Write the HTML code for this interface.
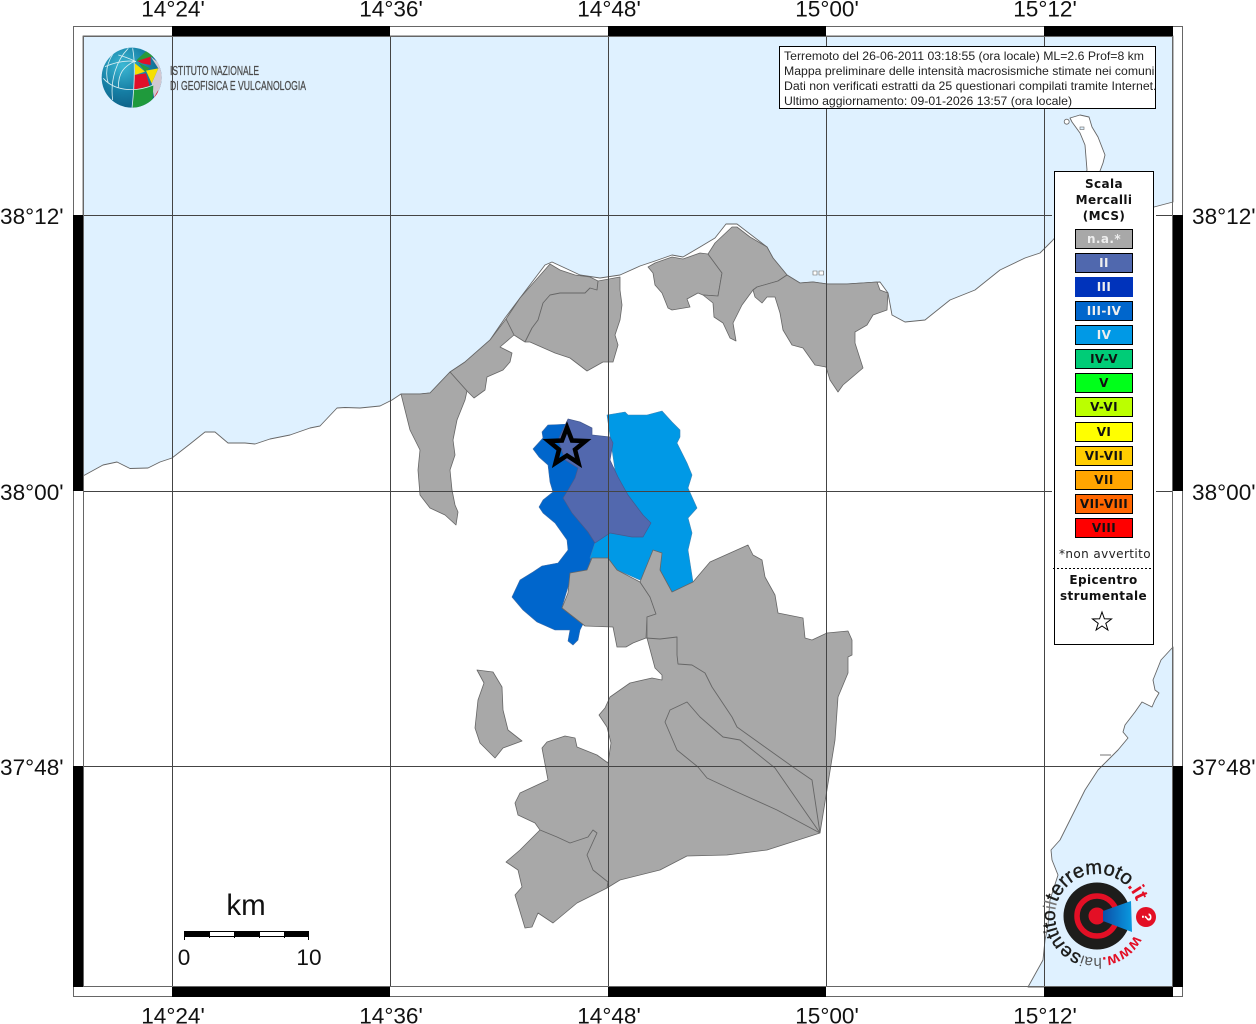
<!DOCTYPE html>
<html><head><meta charset="utf-8"><title>Mappa</title>
<style>
html,body{margin:0;padding:0;background:#fff;width:1256px;height:1024px;overflow:hidden}
svg{display:block;filter:blur(.3px)}
.lab{font-family:"Liberation Sans",sans-serif;font-size:22.6px;fill:#111}
.lg{font-family:"DejaVu Sans",sans-serif;font-size:12px;font-weight:700;letter-spacing:.4px;text-anchor:middle;fill:#111}
.info{font-family:"Liberation Sans",sans-serif;font-size:12.25px;fill:#222}
.ingv{font-family:"Liberation Sans",sans-serif;font-size:13px;fill:#4a4a4a;stroke:#4a4a4a;stroke-width:.25}
.g{fill:#a8a8a8;stroke:#666;stroke-width:.8;stroke-linejoin:round}
.l{fill:none;stroke:#666;stroke-width:.9;stroke-linejoin:round}
.gr{stroke:#444;stroke-width:1;fill:none}
</style></head><body>
<svg width="1256" height="1024" viewBox="0 0 1256 1024" xmlns="http://www.w3.org/2000/svg">
<defs>
<radialGradient id="gb" cx=".35" cy=".3" r=".8"><stop offset="0" stop-color="#3cb8d4"/><stop offset=".55" stop-color="#157da3"/><stop offset="1" stop-color="#0d5a80"/></radialGradient>
<linearGradient id="cone" x1="0" x2="1" y1="0" y2="0"><stop offset="0" stop-color="#0b4fa8"/><stop offset="1" stop-color="#0a9ae0"/></linearGradient>
<clipPath id="gc"><circle cx="215" cy="233" r="90"/></clipPath>
<clipPath id="ic"><rect x="779" y="46" width="377" height="63"/></clipPath>
</defs>
<rect x="83" y="36" width="1090" height="951" fill="#fff"/>
<!-- sea -->
<path fill="#dff1ff" stroke="#666" stroke-width=".9" stroke-linejoin="round" d="M83 36H1173V202L1154 207L1110 205L1100 171L1103 163L1105 155L1098 137L1092 127L1089 117L1080 115L1070 118L1072 122L1080 133L1085 145L1087 170L1075 215L1052 241L1040 253L1025 258L1000 270L975 290L950 300L925 320L905 322L892 315L888 293L880 282L847 284L827 284L813 282L800 283L787 275L773 258L767 247L750 234L737 224L726 224L715 238L700 247L683 257L672 255L655 261L640 266L620 275L600 278L580 275L565 268L552 262L545 265L520 298L505 318L490 340L465 362L450 372L430 393L420 394L401 394L392 400L380 406L360 408L345 407.5L337 408L320 426L310 428L290 435L270 439L255 444L245 443L228 443L215 432L205 432L190 444L172 458L160 462L148 468L130 468.5L117 462L103 465L83 476Z"/>
<path fill="#dff1ff" stroke="#666" stroke-width=".9" stroke-linejoin="round" d="M1173 647L1161 660L1153 680L1155 690L1159 693L1155 700L1152 707L1142 702L1135 712L1125 725L1123 732L1128 738L1118 750L1108 760L1098 770L1085 790L1060 840L1051 850L1052 860L1058 875L1050 900L1048 925L1045 940L1043 960L1028 987H1173Z"/>
<path class="l" d="M1100 755H1111"/>
<circle cx="1066.7" cy="121.7" r="2.5" fill="#fff" stroke="#666" stroke-width=".8"/>
<rect x="1080" y="127" width="4" height="2.5" fill="#dff1ff" stroke="#666" stroke-width=".6"/>
<path fill="#fff" stroke="#666" stroke-width=".6" d="M813 271h4v4h-4zM819 271h4.500v4h-4.500z"/>
<!-- coloured -->
<path fill="#0066cc" stroke="#3a6ba8" stroke-width=".6" stroke-linejoin="round" d="M542 432L548 425L570 424L590 440L610 500L595 543L588 570L572 573L568 587L562 607L585 620L580 630L578 640L573 645L568 641L570 630L555 630L537 622L523 610L512 597L520 580L533 572L542 566L558 563L568 550L567 540L555 523L543 513L539 507L543 500L553 492L550 482L548 465L539 457L533 449L543 438Z"/>
<path fill="#0099e6" stroke="#3a85b8" stroke-width=".6" stroke-linejoin="round" d="M607 415L625 412L628 415L647 415L662 411L672 422L680 430L680 437L677 443L687 463L692 475L688 488L697 508L688 518L692 533L688 550L693 582L672 593L655 560L640 580L590 558L595 543L610 533L615 470Z"/>
<path fill="#5268ae" stroke="#445a90" stroke-width=".7" stroke-linejoin="round" d="M568 419L580 422L592 428L592 435L610 437L613 443L610 460L618 477L628 495L643 515L651 523L643 537L632 537L610 533L595 543L588 532L572 513L563 498L568 490L575 478L578 468L565 460L558 440Z"/>
<!-- grey -->
<path class="g" d="M550 264L560 270L575 275L590 277L598 281L620 277L620 290L622 305L620 320L615 335L618 345L613 362L603 362L587 371L570 358L555 353L530 342L525 342L514 335L506 319L520 298Z"/>
<path class="l" d="M598 281L597 290L590 288L585 293L560 293L550 295L543 303L538 320L532 328L525 342"/>
<path class="g" d="M506 319L514 335L500 347L512 353L510 362L503 370L487 377L485 390L474 398L467 391L450 372L465 362L490 340Z"/>
<path class="g" d="M401 394L420 394L430 393L450 372L467 391L465 400L457 420L453 440L455 455L450 470L452 490L455 505L458 512L456 525L445 515L430 508L420 495L418 470L420 450L410 430L405 410Z"/>
<path class="g" d="M648 267L655 263L672 257L683 259L700 253L708 254L722 273L718 296L703 295L698 293L687 299L690 307L672 310L668 308L662 293L655 285L653 273Z"/>
<path class="g" d="M708 254L715 243L732 227L737 227L750 237L767 247L773 258L787 275L778 281L757 287L753 290L742 305L733 323L736 341L730 338L723 323L714 317L713 303L703 295L718 296L722 273Z"/>
<path class="g" d="M787 275L800 283L813 282L827 284L847 284L877 282L880 290L888 293L887 310L873 315L867 325L855 332L855 343L863 368L843 385L838 392L830 380L826 367L815 365L803 348L792 345L783 330L780 313L775 297L767 297L762 303L755 297L753 290L757 287L778 281Z"/>
<path class="g" d="M570 573L587 570L592 558L608 558L617 570L640 582L650 597L656 614L647 617L646 638L633 643L626 647L617 647L613 627L585 626L562 608L568 593Z"/>
<path class="g" d="M647 638L655 668L662 675L662 680L652 678L630 683L610 697L605 708L599 715L607 727L611 743L608 763L597 755L577 747L575 738L565 736L547 742L542 748L548 780L520 793L515 803L518 815L535 823L540 830L520 850L506 862L518 870L522 887L515 895L525 928L532 927L538 913L553 923L577 903L607 888L620 880L660 870L687 856L727 855L767 850L820 833L835 740L838 697L848 673L848 657L852 655L852 640L848 631L827 633L812 640L805 638L803 618L778 613L775 595L765 577L762 560L753 555L748 545L710 562L693 582L672 592L660 570L662 553L653 550L640 582L650 597L656 614L647 617Z"/>
<path class="l" d="M646 638L660 639L677 637L677 655L678 664L692 665L705 673L712 687L732 717L737 727L793 767L812 780L820 833"/>
<path class="l" d="M820 833L777 810L737 792L707 778L698 767L677 750L665 722L670 710L687 702L700 717L723 737L740 740L775 768L820 833"/>
<path class="l" d="M540 830L557 837L570 843L588 837L593 830L597 833L587 855L593 870L608 882L607 888"/>
<path class="g" d="M477 670L493 672L502 687L503 710L508 730L522 741L503 748L495 758L480 743L475 728L478 700L484 683Z"/>
<!-- grid -->
<path class="gr" d="M172.500 36V987M390.500 36V987M608.500 36V987M826.500 36V987M1044.500 36V987M83 215.500H1052M1156 215.500H1173M83 491.500H1052M1156 491.500H1173M83 766.500H1173"/>
<!-- star -->
<path d="M567 427.500L572 440.500L585.500 441L575 449.600L578.500 463L567 455.500L555.500 463L559 449.600L548.500 441L562 440.500Z" fill="none" stroke="#000" stroke-width="4.500" stroke-miterlimit="10"/>
<!-- frame -->
<rect x="73.500" y="26.500" width="1109" height="970" fill="none" stroke="#666"/>
<rect x="83.500" y="36.500" width="1089" height="950" fill="none" stroke="#666"/>
<path fill="#000" d="M172 26H390V36H172zM608 26H826V36H608zM1044 26H1173V36H1044zM172 987H390V997H172zM608 987H826V997H608zM1044 987H1173V997H1044zM73 215H83V491H73zM73 766H83V987H73zM1173 215H1183V491H1173zM1173 766H1183V987H1173z"/>
<!-- labels -->
<g class="lab" text-anchor="middle">
<text x="173" y="16.500">14°24'</text><text x="391" y="16.500">14°36'</text><text x="609" y="16.500">14°48'</text><text x="827" y="16.500">15°00'</text><text x="1045" y="16.500">15°12'</text>
<text x="173" y="1023.500">14°24'</text><text x="391" y="1023.500">14°36'</text><text x="609" y="1023.500">14°48'</text><text x="827" y="1023.500">15°00'</text><text x="1045" y="1023.500">15°12'</text>
</g>
<g class="lab"><text x="0" y="224">38°12'</text><text x="0" y="500">38°00'</text><text x="0" y="775">37°48'</text>
<text x="1192" y="224">38°12'</text><text x="1192" y="500">38°00'</text><text x="1192" y="775">37°48'</text></g>
<!-- INGV logo -->
<g transform="translate(60 0) scale(.3333)">
<circle cx="215" cy="233" r="90" fill="url(#gb)"/>
<g clip-path="url(#gc)">
<path fill="#d2c8d2" d="M272 170L310 200L310 300L282 292L275 250L295 205Z"/>
<path fill="#2a9a3a" d="M230 180L262 150L280 170L232 185Z"/>
<path fill="#e0102a" d="M232 183L272 170L272 195L246 190Z"/>
<path fill="#f6e000" d="M225 190L255 215L225 225Z"/>
<path fill="#2a9a3a" d="M235 187L270 205L255 215Z"/>
<path fill="#f6e000" d="M258 212L295 205L275 250Z"/>
<path fill="#e0102a" d="M222 225L258 220L270 262L222 268Z"/>
<path fill="#1f9a3c" d="M220 270L280 255L278 300L250 325L218 325Z"/>
<path fill="#e0102a" d="M282 292L295 270L290 290Z"/>
<path fill="none" stroke="#d8eef2" stroke-width="2.500" d="M218 145C228 200 222 270 216 325M205 145C170 180 150 240 158 300M160 160C140 190 135 220 145 250M130 235C160 270 220 280 280 255M135 200C170 185 200 180 228 185M175 165C200 172 215 178 228 185M225 183C190 200 175 220 175 262"/>
</g></g>
<text class="ingv" x="170" y="75" textLength="89" lengthAdjust="spacingAndGlyphs">ISTITUTO NAZIONALE</text>
<text class="ingv" x="170" y="90" textLength="136" lengthAdjust="spacingAndGlyphs">DI GEOFISICA E VULCANOLOGIA</text>
<!-- info box -->
<rect x="779.500" y="46.500" width="376" height="62" fill="#fff" stroke="#000"/>
<g clip-path="url(#ic)">
<text class="info" x="784" y="60">Terremoto del 26-06-2011 03:18:55 (ora locale) ML=2.6 Prof=8 km</text>
<text class="info" x="784" y="75">Mappa preliminare delle intensità macrosismiche stimate nei comuni</text>
<text class="info" x="784" y="90">Dati non verificati estratti da 25 questionari compilati tramite Internet.</text>
<text class="info" x="784" y="105">Ultimo aggiornamento: 09-01-2026 13:57 (ora locale)</text>
</g>
<!-- legend -->
<rect x="1054.500" y="171.500" width="99" height="473" fill="#fff" stroke="#000"/>
<text class="lg" x="1104" y="188">Scala</text><text class="lg" x="1104" y="204">Mercalli</text><text class="lg" x="1104" y="220">(MCS)</text>
<g stroke="#000">
<rect x="1075.500" y="229.500" width="57" height="19" fill="#a8a8a8"/>
<rect x="1075.500" y="253.500" width="57" height="19" fill="#5068ae"/>
<rect x="1075" y="277" width="58" height="20" fill="#0033bb" stroke="none"/>
<rect x="1075.500" y="301.500" width="57" height="19" fill="#0066cc"/>
<rect x="1075.500" y="325.500" width="57" height="19" fill="#0099e6"/>
<rect x="1075.500" y="349.500" width="57" height="19" fill="#00cc77"/>
<rect x="1075.500" y="373.500" width="57" height="19" fill="#00ff1a"/>
<rect x="1075.500" y="397.500" width="57" height="19" fill="#bbff00"/>
<rect x="1075.500" y="422.500" width="57" height="19" fill="#ffff00"/>
<rect x="1075.500" y="446.500" width="57" height="19" fill="#ffcc00"/>
<rect x="1075.500" y="470.500" width="57" height="19" fill="#ffa500"/>
<rect x="1075.500" y="494.500" width="57" height="19" fill="#ff6600"/>
<rect x="1075.500" y="518.500" width="57" height="19" fill="#ff0000"/>
</g>
<g class="lg">
<text x="1104" y="243" style="fill:#eee">n.a.*</text>
<text x="1104" y="267" style="fill:#eee">II</text>
<text x="1104" y="291" style="fill:#eee">III</text>
<text x="1104" y="315" style="fill:#eee">III-IV</text>
<text x="1104" y="339" style="fill:#eee">IV</text>
<text x="1104" y="363">IV-V</text>
<text x="1104" y="387">V</text>
<text x="1104" y="411">V-VI</text>
<text x="1104" y="436">VI</text>
<text x="1104" y="460">VI-VII</text>
<text x="1104" y="484">VII</text>
<text x="1104" y="508">VII-VIII</text>
<text x="1104" y="532">VIII</text>
</g>
<text x="1105" y="558" text-anchor="middle" style="font-family:'DejaVu Sans',sans-serif;font-size:12px;letter-spacing:.4px;fill:#222">*non avvertito</text>
<path d="M1053 568.500H1152" stroke="#000" stroke-dasharray="2 2" fill="none"/>
<text class="lg" x="1103.500" y="584">Epicentro</text><text class="lg" x="1103.500" y="600">strumentale</text>
<path d="M1102 612L1104.400 618.800L1111.500 619L1105.800 623.300L1107.900 630L1102 626L1096.100 630L1098.200 623.300L1092.500 619L1099.600 618.800Z" fill="#fff" stroke="#000"/>
<!-- scale -->
<text x="246" y="915" text-anchor="middle" style="font-family:'Liberation Sans',sans-serif;font-size:29.500px;fill:#111">km</text>
<rect x="184.500" y="931.500" width="124" height="5" fill="#fff" stroke="#000"/>
<path fill="#000" d="M184 931H209.500V937H184zM234 931H259V937H234zM284 931H309V937H284z"/>
<path stroke="#000" fill="none" d="M184.500 931V940M209.500 931V938M234.500 931V938M259.500 931V938M284.500 931V938M308.500 931V940"/>
<text class="lab" x="184" y="965" text-anchor="middle">0</text><text class="lab" x="309" y="965" text-anchor="middle">10</text>
<!-- haisentito logo -->
<circle cx="1097" cy="916" r="33.500" fill="#1d1d1b"/>
<circle cx="1097" cy="916" r="20" fill="none" stroke="#e30f25" stroke-width="5.500"/>
<circle cx="1097" cy="916" r="8.500" fill="#e30f25"/>
<path d="M1103 911L1131 901L1132 932L1103 921Z" fill="url(#cone)"/>
<circle cx="1146" cy="917" r="10" fill="#e30f25"/>
<text x="1146" y="921" text-anchor="middle" transform="rotate(90 1146 917)" style="font-family:'Liberation Sans',sans-serif;font-size:14px;font-weight:700;fill:#fff">?</text>
<path id="cp" fill="none" d="M1134.400 935A42 42 0 1 1 1136.500 901.600"/>
<text style="font-family:'Liberation Sans',sans-serif;fill:#1d1d1b"><textPath href="#cp"><tspan fill="#e30f25" font-weight="700" font-size="16">www.</tspan><tspan fill="#555" font-size="15">hai</tspan><tspan font-size="19" stroke="#1d1d1b" stroke-width=".4">sentito</tspan><tspan fill="#777" font-size="18">il</tspan><tspan font-size="20" stroke="#1d1d1b" stroke-width=".4">terremoto</tspan><tspan fill="#e30f25" font-size="20" font-weight="700">.it</tspan></textPath></text>
</svg>
</body></html>
